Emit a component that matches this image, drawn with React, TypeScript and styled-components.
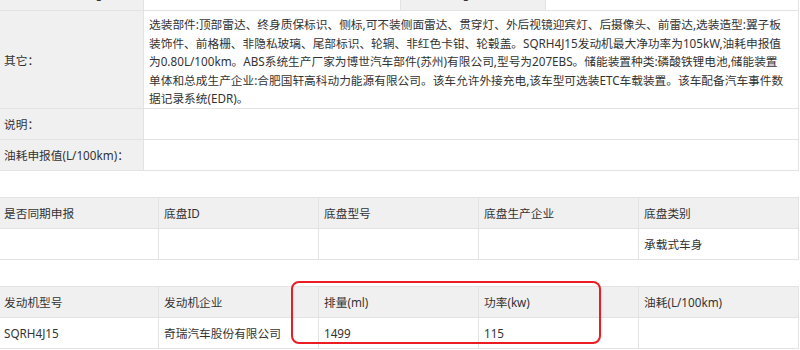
import React from "react";
import styled, { createGlobalStyle } from "styled-components";

const Global = createGlobalStyle`
  html, body { margin: 0; padding: 0; background: #fff; }
  body { font-family: "Noto Sans", "Noto Sans CJK SC", sans-serif; color: #333; }
`;

const Page = styled.div`
  width: 800px;
  height: 350px;
  overflow: hidden;
  position: relative;
`;

const Sheet = styled.div`
  margin-left: -2px;
  width: 800px;
  display: flex;
  flex-direction: column;
  gap: 26px;
  margin-top: -27px;
`;

const Section = styled.div`
  position: relative;
`;

const Table = styled.table`
  width: 800px;
  border-collapse: collapse;
  table-layout: fixed;
  font-size: 11.7px;
`;

const Cell = styled.td<{ $head?: boolean; $h?: number }>`
  border: 1px solid #e3e3e3;
  background: ${(p) => (p.$head ? "#f0f0f0" : "#fff")};
  padding: 0 5px;
  height: ${(p) => p.$h ?? 30}px;
  vertical-align: middle;
  color: #333;
  white-space: nowrap;
`;

const LongText = styled.td`
  border: 1px solid #e3e3e3;
  background: #fff;
  padding: 4px 5px 0;
  line-height: 18.6px;
  vertical-align: top;
  color: #333;
`;

const Highlight = styled.div`
  position: absolute;
  left: 293px;
  top: -5px;
  width: 306px;
  height: 59px;
  border: 2px solid #ec1c24;
  border-radius: 8px;
  pointer-events: none;
`;

const otherLines = [
  "选装部件:顶部雷达、终身质保标识、侧标,可不装侧面雷达、贯穿灯、外后视镜迎宾灯、后摄像头、前雷达,选装造型:翼子板",
  "装饰件、前格栅、非隐私玻璃、尾部标识、轮辋、非红色卡钳、轮毂盖。SQRH4J15发动机最大净功率为105kW,油耗申报值",
  "为0.80L/100km。ABS系统生产厂家为博世汽车部件(苏州)有限公司,型号为207EBS。储能装置种类:磷酸铁锂电池,储能装置",
  "单体和总成生产企业:合肥国轩高科动力能源有限公司。该车允许外接充电,该车型可选装ETC车载装置。该车配备汽车事件数",
  "据记录系统(EDR)。",
];

const chassisHead = ["是否同期申报", "底盘ID", "底盘型号", "底盘生产企业", "底盘类别"];
const chassisData = ["", "", "", "", "承载式车身"];
const engineHead = ["发动机型号", "发动机企业", "排量(ml)", "功率(kw)", "油耗(L/100km)"];
const engineData = ["SQRH4J15", "奇瑞汽车股份有限公司", "1499", "115", ""];

function FiveCols() {
  return (
    <colgroup>
      <col style={{ width: 160 }} />
      <col style={{ width: 160 }} />
      <col style={{ width: 160 }} />
      <col style={{ width: 160 }} />
      <col style={{ width: 160 }} />
    </colgroup>
  );
}

export default function App() {
  return (
    <Page>
      <Global />
      <Sheet>
        <Section>
          <Table>
            <colgroup>
              <col style={{ width: 145 }} />
              <col style={{ width: 257 }} />
              <col style={{ width: 145 }} />
              <col style={{ width: 253 }} />
            </colgroup>
            <tbody>
              <tr>
                <Cell $head $h={36}>最大设计总质量(kg)：</Cell>
                <Cell $h={36}></Cell>
                <Cell $head $h={36}>整备质量(kg)：</Cell>
                <Cell $h={36}></Cell>
              </tr>
              <tr>
                <Cell $head>其它：</Cell>
                <LongText colSpan={3}>
                  {otherLines.map((l, i) => (
                    <React.Fragment key={i}>
                      {l}
                      {i < otherLines.length - 1 && <br />}
                    </React.Fragment>
                  ))}
                </LongText>
              </tr>
              <tr>
                <Cell $head>说明：</Cell>
                <Cell colSpan={3}></Cell>
              </tr>
              <tr>
                <Cell $head>油耗申报值(L/100km)：</Cell>
                <Cell colSpan={3}></Cell>
              </tr>
            </tbody>
          </Table>
        </Section>

        <Section>
          <Table>
            <FiveCols />
            <tbody>
              <tr>
                {chassisHead.map((t) => (
                  <Cell $head key={t}>{t}</Cell>
                ))}
              </tr>
              <tr>
                {chassisData.map((t, i) => (
                  <Cell key={i}>{t}</Cell>
                ))}
              </tr>
            </tbody>
          </Table>
        </Section>

        <Section>
          <Table>
            <FiveCols />
            <tbody>
              <tr>
                {engineHead.map((t) => (
                  <Cell $head key={t}>{t}</Cell>
                ))}
              </tr>
              <tr>
                {engineData.map((t, i) => (
                  <Cell key={i}>{t}</Cell>
                ))}
              </tr>
            </tbody>
          </Table>
          <Highlight />
        </Section>
      </Sheet>
    </Page>
  );
}
